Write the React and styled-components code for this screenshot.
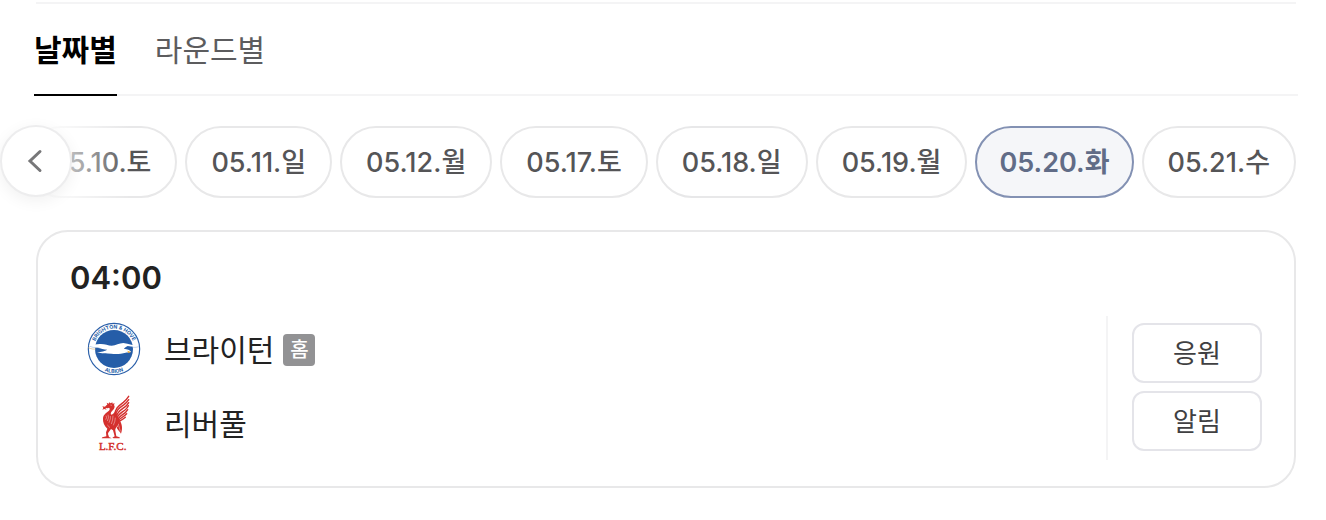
import React, { useState } from "react";
import styled, { createGlobalStyle, css } from "styled-components";

const GlobalStyle = createGlobalStyle`
  *, *::before, *::after { box-sizing: border-box; }
  body {
    margin: 0;
    background: #fff;
    color: #222;
    font-family: Inter, "Noto Sans CJK KR", sans-serif;
  }
  button { font: inherit; cursor: pointer; }
`;

const Page = styled.main`
  padding: 2px 30px 32px 36px;
`;

const TabBar = styled.nav`
  display: flex;
  gap: 38px;
  margin: 0 -2px;
  border-bottom: 2px solid #f4f4f5;
`;

const TopRule = styled.hr`
  height: 2px;
  margin: 0;
  border: 0;
  background: #f4f4f5;
`;

const Tab = styled.button`
  height: 92px;
  margin-bottom: -2px;
  padding: 2px 0 0;
  border: 0;
  border-bottom: 2px solid ${(p) => (p.$active ? "#000" : "transparent")};
  background: none;
  color: ${(p) => (p.$active ? "#000" : "#5c5c5e")};
  font-size: 30px;
  font-weight: ${(p) => (p.$active ? 700 : 400)};
  line-height: 40px;
`;

const DateStrip = styled.div`
  position: relative;
  margin: 30px 0 32px -36px;
`;

const DateList = styled.div`
  display: flex;
  justify-content: flex-end;
  gap: 8px;
  overflow: hidden;
`;

const DateChip = styled.button`
  flex: none;
  height: 72px;
  padding: 2px 24px 0;
  border: 2px solid #e8e8e9;
  border-radius: 36px;
  background: #fff;
  color: #555557;
  font-size: 27px;
  font-weight: 500;
  line-height: 36px;
  white-space: nowrap;
  ${(p) =>
    p.$active &&
    css`
      padding: 2px 22px 0;
      border-color: #8391b3;
      background: #f5f6f9;
      color: #616c87;
      font-weight: 600;
    `}
`;

const Fade = styled.div`
  position: absolute;
  inset: 0 auto 0 0;
  width: 130px;
  background: linear-gradient(to right, #fff 36px, rgba(255, 255, 255, 0));
  pointer-events: none;
`;

const PrevButton = styled.button`
  position: absolute;
  top: -1px;
  left: 0;
  display: grid;
  place-items: center;
  width: 72px;
  height: 72px;
  padding: 0;
  border: 2px solid #ededee;
  border-radius: 50%;
  background: #fff;
  box-shadow: 0 4px 16px rgba(0, 0, 0, 0.06);
`;

const Card = styled.article`
  padding: 26px 32px;
  border: 2px solid #e8e8e9;
  border-radius: 32px;
`;

const Kickoff = styled.h2`
  margin: 0 0 18px;
  font-size: 31px;
  font-weight: 600;
  line-height: 40px;
`;

const MatchBody = styled.div`
  display: flex;
  justify-content: space-between;
`;

const Teams = styled.ul`
  display: flex;
  flex-direction: column;
  gap: 18px;
  margin: 0;
  padding: 5px 0 0 16px;
  list-style: none;
`;

const Team = styled.li`
  display: flex;
  align-items: center;
  height: 56px;
`;

const Crest = styled.svg`
  flex: none;
  width: 56px;
  height: 56px;
`;

const TeamName = styled.span`
  margin-left: 22px;
  padding-top: 2px;
  font-size: 30px;
  line-height: 40px;
`;

const HomeBadge = styled.span`
  width: 32px;
  height: 32px;
  margin: 2px 0 0 9px;
  border-radius: 4px;
  background: #929294;
  color: #fff;
  font-size: 20px;
  font-weight: 500;
  line-height: 32px;
  text-align: center;
`;

const Actions = styled.div`
  display: flex;
  flex-direction: column;
  gap: 8px;
  padding: 7px 0 9px 24px;
  border-left: 2px solid #f4f4f5;
`;

const ActionButton = styled.button`
  width: 130px;
  height: 60px;
  padding: 2px 0 0;
  border: 2px solid #e4e4e9;
  border-radius: 12px;
  background: #fff;
  color: #404042;
  font-size: 26px;
  line-height: 36px;
`;

function BrightonCrest() {
  return (
    <Crest viewBox="18 18 168 168" role="img" aria-label="브라이턴">
      <defs>
        <path id="arc-top" d="M41 102 A61 61 0 0 1 163 102" />
        <path id="arc-bottom" d="M30 102 A72 72 0 0 0 174 102" />
      </defs>
      <circle cx="102" cy="102" r="77" fill="#fff" stroke="#2a5fa9" strokeWidth="3.5" />
      <circle cx="102" cy="102" r="57" fill="#255da8" />
      <g fill="#255da8" fontFamily="Inter, sans-serif" fontWeight="700" fontSize="15.5" textAnchor="middle">
        <text><textPath href="#arc-top" startOffset="50%">BRIGHTON &amp; HOVE</textPath></text>
        <text><textPath href="#arc-bottom" startOffset="50%">ALBION</textPath></text>
      </g>
      <path
        d="M26 90 C38 91 47 87 59 87 C74 86 84 92 95 92 C108 91 117 85 130 84 C146 85 162 94 178 94 C165 97 153 95 143 93 C137 96 133 99 132 102 C141 102 151 105 153 111 C146 112 141 113 137 113 C124 116 110 118 94 116 C78 115 65 117 51 112 C65 111 74 109 82 104 C71 104 63 99 52 98 C42 99 34 97 26 90Z"
        fill="#fff"
      />
      <path d="M25 98 C34 102 40 103 47 102" fill="none" stroke="#d8b77d" strokeWidth="2" />
      <path d="M30 94 C44 101 50 95 59 99 M158 97 Q169 98 176 95" fill="none" stroke="#91aace" strokeWidth="1.5" />
      <path d="M142 107 L153 111 L145 114Z" fill="#f1a52b" />
    </Crest>
  );
}

function LiverpoolCrest() {
  return (
    <Crest viewBox="18 21 168 168" role="img" aria-label="리버풀">
      <g fill="#d4302e">
        <path d="M82 50 L80 44 L86 47 L88 43 L92 46 L97 43 L98 47 L104 46 L102 51 C106 56 103 62 99 66 C94 71 91 75 93 80 C100 79 103 73 107 69 L114 87 C120 93 120 105 113 113 C108 119 105 122 106 128 L109 145 L119 148 L119 151 L101 151 L97 149 L104 145 L99 127 L93 123 C89 130 84 133 84 138 L87 147 L95 151 L65 151 L67 148 L79 145 L78 133 L82 122 C73 113 68 102 69 92 C69 82 77 76 85 70 C89 66 91 62 87 59 L83 61 L76 60 L80 65 L73 63 L67 65 L70 60 L67 55 L75 56 L79 52Z" />
        <path d="M117 94 C126 106 129 121 123 137 C120 130 114 127 110 119 C116 114 119 105 117 94Z" />
      </g>
      <g fill="none" stroke="#d4302e" strokeLinecap="round" strokeWidth="4.2">
        <path d="M105 82 C103 64 115 54 130 43 Q139 36 146 25" />
        <path d="M107 84 C106 68 119 59 132 50 Q141 43 146 35" />
        <path d="M109 87 C110 73 122 66 133 58 Q142 52 146 44" />
        <path d="M111 91 C114 79 125 74 135 66 Q142 60 145 53" />
        <path d="M113 94 C118 85 127 81 136 74 L143 65" />
        <path d="M115 97 C121 91 129 88 140 77" />
        <path d="M117 100 Q127 96 136 88" />
      </g>
      <g fill="none" stroke="#fff" strokeWidth="1.2">
        <path d="M91 51 L96 52 M78 83 Q82 89 77 95 M84 80 Q88 88 82 99 M91 84 Q93 91 87 104 M99 83 Q99 96 94 108 M106 89 Q106 99 100 112 M82 111 L90 119 M116 112 L121 130" />
      </g>
      <text x="98" y="186" fill="#d4302e" fontFamily="Liberation Serif, serif" fontSize="33" textAnchor="middle" stroke="#d4302e" strokeWidth="1.4">L.F.C.</text>
    </Crest>
  );
}

const TABS = ["날짜별", "라운드별"];
const DATES = ["05.10.토", "05.11.일", "05.12.월", "05.17.토", "05.18.일", "05.19.월", "05.20.화", "05.21.수"];
const TEAMS = [
  { name: "브라이턴", crest: BrightonCrest, home: true },
  { name: "리버풀", crest: LiverpoolCrest, home: false },
];

export default function App() {
  const [tab, setTab] = useState(TABS[0]);
  const [date, setDate] = useState("05.20.화");

  return (
    <Page>
      <GlobalStyle />
      <TopRule />
      <TabBar>
        {TABS.map((t) => (
          <Tab key={t} type="button" $active={t === tab} aria-pressed={t === tab} onClick={() => setTab(t)}>
            {t}
          </Tab>
        ))}
      </TabBar>
      <DateStrip>
        <DateList>
          {DATES.map((d) => (
            <DateChip key={d} type="button" $active={d === date} aria-pressed={d === date} onClick={() => setDate(d)}>
              {d}
            </DateChip>
          ))}
        </DateList>
        <Fade />
        <PrevButton type="button" aria-label="이전 날짜">
          <svg width="24" height="24" viewBox="0 0 24 24" fill="none" stroke="#777779" strokeWidth="3" strokeLinecap="round">
            <path d="M16 2.5 L6 12 L16 21.5" />
          </svg>
        </PrevButton>
      </DateStrip>
      <Card>
        <Kickoff>04:00</Kickoff>
        <MatchBody>
          <Teams>
            {TEAMS.map(({ name, crest: Logo, home }) => (
              <Team key={name}>
                <Logo />
                <TeamName>{name}</TeamName>
                {home && <HomeBadge>홈</HomeBadge>}
              </Team>
            ))}
          </Teams>
          <Actions>
            <ActionButton type="button">응원</ActionButton>
            <ActionButton type="button">알림</ActionButton>
          </Actions>
        </MatchBody>
      </Card>
    </Page>
  );
}
